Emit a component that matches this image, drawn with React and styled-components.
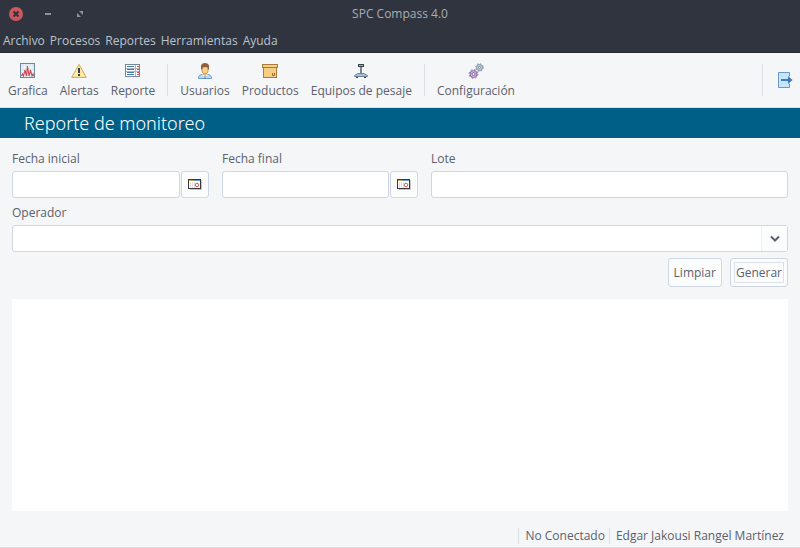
import React from 'react';
import styled, { createGlobalStyle } from 'styled-components';

const GlobalStyle = createGlobalStyle`
  *,
  *::before,
  *::after {
    box-sizing: border-box;
  }

  body {
    margin: 0;
    background: #f4f6f8;
    color: #5c616c;
    font-family: 'Open Sans', 'Noto Sans', sans-serif;
    font-size: 12px;
    line-height: 16px;
  }

  button,
  input,
  select {
    font: inherit;
    color: inherit;
  }
`;

const ChartIcon = () => (
  <Icon viewBox='0 0 16 16'>
    <rect x='0.5' y='0.5' width='14' height='14' fill='#dde9f0' stroke='#74889b' />
    <path d='M4.5 1v13M8.5 1v13M11.5 1v13M1 4.5h13M1 8.5h13' stroke='#eef4f7' />
    <path
      d='M1.5 13l1-2 1 2 1.5-6 1.5 6L7.5 3 9 13l1.5-6 1.5 6 1-2 .8 2'
      fill='none'
      stroke='#cc4a52'
      strokeWidth='1.1'
    />
  </Icon>
);

const WarningIcon = () => (
  <Icon viewBox='0 0 16 16'>
    <path d='M8 1.4L15.3 14.4H.7z' fill='#ffeaa0' stroke='#c9a95b' strokeLinejoin='round' />
    <path d='M7 5h2v5H7zM7 11h2v2H7z' fill='#36404d' />
  </Icon>
);

const ReportIcon = () => (
  <Icon viewBox='0 0 16 16'>
    <rect x='0.5' y='1.5' width='14' height='12' fill='#fff' stroke='#74889b' />
    <path d='M10.5 2v11M1 5.5h13M1 8.5h13' stroke='#a9b8c5' />
    <path d='M2 3.5h7M2 6.5h7M2 9.5h7M2 11.5h7' stroke='#4778a6' />
    <path d='M12 3.5h2M12 6.5h2M12 9.5h2M12 11.5h2' stroke='#d0555a' />
  </Icon>
);

const UserIcon = () => (
  <Icon viewBox='0 0 16 16'>
    <path d='M1.5 15.5c0-2.500 1-3.500 3.500-4h6c2.500.5 3.500 1.500 3.500 4z' fill='#b9dcf8' stroke='#6d9bcd' />
    <path d='M6 9h4v3l-2 2-2-2z' fill='#eec07a' />
    <path d='M5 4h6v3.500C11 9.500 9.500 11 8 11S5 9.500 5 7.500z' fill='#f6cf8b' stroke='#b88749' strokeWidth='.8' />
    <path d='M4 6.500V3c0-2 2-3 4-3s4 1 4 3v3.500h-1L10.500 4H6l-1 2.500z' fill='#925f3d' />
    <path d='M5.500 11.500L8 14l2.500-2.500' fill='none' stroke='#fff' />
    <path d='M8 13v2.500' stroke='#4d7fb5' />
  </Icon>
);

const BoxIcon = () => (
  <Icon viewBox='0 0 16 16'>
    <rect x='1.5' y='3.5' width='13' height='11' fill='#f6cd84' stroke='#a67b3d' />
    <rect x='0.5' y='1.5' width='15' height='3' fill='#f6cd84' stroke='#a67b3d' />
    <path d='M10.5 10v2.5h2V10' fill='none' stroke='#936c36' />
  </Icon>
);

const ScaleIcon = () => (
  <Icon viewBox='0 0 16 16'>
    <path d='M8 4v6' stroke='#71859b' strokeWidth='2' />
    <rect x='5.5' y='1.5' width='5' height='2' fill='#8eb6b2' stroke='#37434f' />
    <path d='M5 10.5h6l3.5 2v1h-13v-1z' fill='#a9bdd3' stroke='#71859b' />
    <path d='M3 14.5h2M11 14.5h2' stroke='#37434f' />
  </Icon>
);

const GearsIcon = () => (
  <Icon viewBox='0 0 16 16'>
    <circle cx='11.5' cy='4.5' r='3' fill='#bdcbd6' stroke='#8195a8' />
    <circle cx='11.5' cy='4.5' r='3.8' fill='none' stroke='#8195a8' strokeDasharray='1.5 1.5' />
    <circle cx='11.5' cy='4.5' r='1' fill='#eef1f4' stroke='#8195a8' />
    <circle cx='5.5' cy='11' r='3.5' fill='#cdb8dc' stroke='#8b6ba3' />
    <circle cx='5.5' cy='11' r='4.4' fill='none' stroke='#8b6ba3' strokeDasharray='1.7 1.75' />
    <circle cx='5.5' cy='11' r='1.5' fill='#f1eaf5' stroke='#8b6ba3' />
  </Icon>
);

const ExitIcon = () => (
  <Icon viewBox='0 0 16 16'>
    <path d='M1 0h12v16H1z' fill='#c3e6fd' />
    <path d='M12.5 4V.5h-11v15h11V12' fill='none' stroke='#6d97c9' />
    <path d='M4 7h7V4l4.5 4-4.5 4V9H4z' fill='#4379b7' />
  </Icon>
);

const CalendarIcon = () => (
  <Icon viewBox='0 0 16 16'>
    <path d='M3 13.5h11.5V4' fill='none' stroke='#c5c5c5' />
    <rect x='1.5' y='3.5' width='12' height='9' fill='#fff' stroke='#333a3d' />
    <path d='M2 4.5h4' stroke='#eda63a' />
    <path d='M6 4.5h7' stroke='#6b9dca' />
    <path d='M3.5 6v6M5.5 6v6M7.5 6v6' stroke='#e0e0e0' />
    <circle cx='10' cy='9' r='1.8' fill='#fff' stroke='#d95757' />
  </Icon>
);

const TOOLS = [
  [
    { label: 'Grafica', icon: <ChartIcon /> },
    { label: 'Alertas', icon: <WarningIcon /> },
    { label: 'Reporte', icon: <ReportIcon /> },
  ],
  [
    { label: 'Usuarios', icon: <UserIcon /> },
    { label: 'Productos', icon: <BoxIcon /> },
    { label: 'Equipos de pesaje', icon: <ScaleIcon /> },
  ],
  [{ label: 'Configuración', icon: <GearsIcon /> }],
];

const MENUS = ['Archivo', 'Procesos', 'Reportes', 'Herramientas', 'Ayuda'];

const DateField = ({ id, label }) => (
  <Field>
    <Label htmlFor={id}>{label}</Label>
    <DateRow>
      <TextInput id={id} type='text' />
      <PickerButton type='button' aria-label={`Elegir ${label.toLowerCase()}`}>
        <CalendarIcon />
      </PickerButton>
    </DateRow>
  </Field>
);

const App = () => {
  return (
    <Window>
      <GlobalStyle />
      <TitleBar>
        <WindowButtons>
          <WindowButton type='button' aria-label='Cerrar'>
            <svg width='14' height='14' viewBox='0 0 14 14'>
              <circle cx='7' cy='7' r='7' fill='#cc575d' />
              <path d='M4.5 4.5l5 5M9.5 4.5l-5 5' stroke='#2f343f' strokeWidth='2' />
            </svg>
          </WindowButton>
          <WindowButton type='button' aria-label='Minimizar'>
            <svg width='14' height='14' viewBox='0 0 14 14'>
              <path d='M4 7h6' stroke='#90939b' strokeWidth='2' />
            </svg>
          </WindowButton>
          <WindowButton type='button' aria-label='Maximizar'>
            <svg width='14' height='14' viewBox='0 0 14 14'>
              <path d='M6 4h4v4zM4 6v4h4z' fill='#90939b' />
            </svg>
          </WindowButton>
        </WindowButtons>
        <Title>SPC Compass 4.0</Title>
      </TitleBar>

      <MenuBar>
        {MENUS.map((menu) => (
          <MenuButton key={menu} type='button'>
            {menu}
          </MenuButton>
        ))}
      </MenuBar>

      <ToolBar>
        {TOOLS.map((group, index) => (
          <ToolGroup key={index}>
            {group.map(({ label, icon }) => (
              <ToolButton key={label} type='button'>
                {icon}
                {label}
              </ToolButton>
            ))}
          </ToolGroup>
        ))}
        <ExitGroup>
          <ExitButton type='button' aria-label='Salir'>
            <ExitIcon />
          </ExitButton>
        </ExitGroup>
      </ToolBar>

      <Heading>Reporte de monitoreo</Heading>

      <Content>
        <Filters>
          <DateField id='fecha-inicial' label='Fecha inicial' />
          <DateField id='fecha-final' label='Fecha final' />
          <Field>
            <Label htmlFor='lote'>Lote</Label>
            <TextInput id='lote' type='text' />
          </Field>
        </Filters>
        <Field>
          <Label htmlFor='operador'>Operador</Label>
          <SelectBox>
            <Select id='operador' />
            <SelectArrow>
              <svg width='10' height='8' viewBox='0 0 10 8'>
                <path d='M1 1.5l4 4 4-4' fill='none' stroke='#5c616c' strokeWidth='2' />
              </svg>
            </SelectArrow>
          </SelectBox>
        </Field>
        <Actions>
          <Button type='button'>Limpiar</Button>
          <Button type='button' $focused>
            Generar
          </Button>
        </Actions>
        <Results />
      </Content>

      <StatusBar>
        <Status>No Conectado</Status>
        <Status>Edgar Jakousi Rangel Martínez</Status>
      </StatusBar>
    </Window>
  );
};

const Window = styled.div`
  display: flex;
  flex-direction: column;
  min-height: 100vh;
  border-bottom: 1px solid #dcdfe3;
`;

const Icon = styled.svg`
  display: block;
  width: 16px;
  height: 16px;
`;

const PlainButton = styled.button`
  padding: 0;
  border: 0;
  background: none;
`;

const TitleBar = styled.header`
  display: grid;
  grid-template-columns: 1fr auto 1fr;
  align-items: center;
  height: 28px;
  background: #2f343f;
  color: #a9adb5;
`;

const WindowButtons = styled.div`
  display: flex;
  gap: 18px;
  padding-left: 9px;
`;

const WindowButton = styled(PlainButton)`
  display: flex;
`;

const Title = styled.span`
  grid-column: 2;
`;

const MenuBar = styled.nav`
  display: flex;
  align-items: center;
  gap: 5px;
  height: 25px;
  padding: 1px 3px 0;
  background: #2f343f;
  border-bottom: 1px solid #2b2937;
`;

const MenuButton = styled(PlainButton)`
  color: #bac3cf;
`;

const ToolBar = styled.div`
  display: flex;
  height: 55px;
  padding: 0 1px 0 2px;
  border-bottom: 1px solid #dcdfe3;
`;

const ToolGroup = styled.div`
  display: flex;
  align-items: center;

  & + &::before {
    content: '';
    width: 1px;
    height: 32px;
    margin: 0 6px;
    background: #dcdfe3;
  }
`;

const ToolButton = styled(PlainButton)`
  display: flex;
  flex-direction: column;
  align-items: center;
  gap: 4px;
  padding: 2px 6px 0;
  white-space: nowrap;
`;

const ExitGroup = styled.div`
  display: flex;
  align-items: center;
  margin-left: auto;

  &::before {
    content: '';
    width: 1px;
    height: 32px;
    background: #dcdfe3;
  }
`;

const ExitButton = styled(PlainButton)`
  padding: 0 6px 0 14px;
`;

const Heading = styled.h1`
  margin: 0;
  padding: 3px 24px;
  background: #005f87;
  color: #fff;
  font-family: 'Noto Sans', 'Open Sans', sans-serif;
  font-size: 18px;
  font-weight: 300;
  line-height: 24px;
`;

const Content = styled.main`
  display: flex;
  flex: 1;
  flex-direction: column;
  gap: 6px;
  padding: 12px;
`;

const Filters = styled.div`
  display: grid;
  grid-template-columns: 197fr 196fr 357fr;
  gap: 13px;
`;

const Field = styled.div`
  display: flex;
  flex-direction: column;
  gap: 3px;
  min-width: 0;
`;

const Label = styled.label`
  align-self: flex-start;
  line-height: 18px;
`;

const DateRow = styled.div`
  display: flex;
  gap: 1px;
`;

const TextInput = styled.input`
  flex: 1;
  width: 100%;
  min-width: 0;
  height: 27px;
  padding: 0 6px;
  background: #fff;
  border: 1px solid #cfd6e6;
  border-radius: 3px;
`;

const PickerButton = styled.button`
  display: flex;
  flex: none;
  align-items: center;
  justify-content: center;
  width: 28px;
  height: 27px;
  padding: 0 0 1px;
  background: #fbfcfc;
  border: 1px solid #cfd6e6;
  border-radius: 3px;
`;

const SelectBox = styled.div`
  display: grid;
  grid-template-columns: 1fr 27px;
`;

const Select = styled.select`
  grid-area: 1 / 1 / 2 / 3;
  height: 27px;
  padding: 0 32px 0 6px;
  appearance: none;
  background: #fff;
  border: 1px solid #cfd6e6;
  border-radius: 3px;
`;

const SelectArrow = styled.span`
  display: flex;
  grid-area: 1 / 2 / 2 / 3;
  align-items: center;
  justify-content: center;
  margin: 1px 1px 1px 0;
  background: #fbfcfc;
  border-left: 1px solid #eef0f4;
  pointer-events: none;
`;

const Actions = styled.div`
  display: flex;
  justify-content: flex-end;
  gap: 8px;
`;

const Button = styled.button`
  height: 29px;
  padding: 1px 5px 0;
  background: #fbfcfc;
  border: 1px solid #cfd6e6;
  border-radius: 3px;
  outline: ${({ $focused }) => ($focused ? '1px solid #dce0ea' : 'none')};
  outline-offset: -5px;
`;

const Results = styled.section`
  flex: 1;
  margin-top: 6px;
  background: #fff;
`;

const StatusBar = styled.footer`
  display: flex;
  justify-content: flex-end;
  padding: 5px 12px 3px 0;
`;

const Status = styled.span`
  padding: 0 4px 0 6px;
  border-left: 1px solid #dcdfe3;
`;

export default App;
